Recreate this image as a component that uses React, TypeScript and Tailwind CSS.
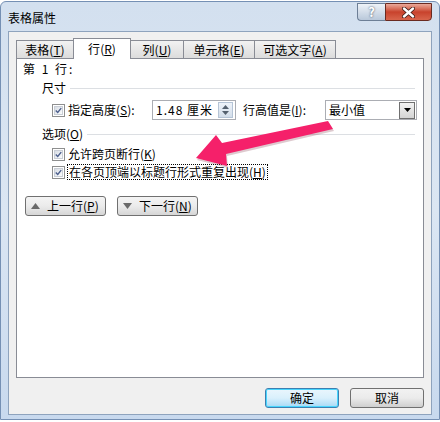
import React from "react";

const Check = () => (
  <div className="w-[13px] h-[13px] border border-[#8e8f8f] bg-white p-[1px] shrink-0">
    <div className="w-full h-full bg-gradient-to-br from-[#d8dde4] to-[#fbfcfd] border border-[#c9ced6] flex items-center justify-center">
      <svg width="9" height="9" viewBox="0 0 9 9">
        <path d="M1 4.5 L3.5 7 L8 1.5" stroke="#4b5e8c" strokeWidth="1.8" fill="none" />
      </svg>
    </div>
  </div>
);

const Key = ({ k }: { k: string }) => (
  <span>
    (<span className="underline">{k}</span>)
  </span>
);

const Tab = ({ label, k, w, active }: { label: string; k: string; w: string; active?: boolean }) =>
  active ? (
    <div className={`${w} h-[21px] bg-white border border-[#898c95] border-b-0 flex items-center justify-center text-[12px] relative z-10 -ml-px`}>
      {label}
      <Key k={k} />
    </div>
  ) : (
    <div className={`${w} h-[18px] mt-[2px] bg-gradient-to-b from-[#f2f2f2] to-[#dcdcdc] border border-[#898c95] border-b-0 flex items-center justify-center text-[12px] -ml-px first:ml-0`}>
      {label}
      <Key k={k} />
    </div>
  );

const BtnSmall = ({ up, label, k }: { up?: boolean; label: string; k: string }) => (
  <div className="w-[81px] h-[20px] rounded-[3px] border border-[#707070] bg-gradient-to-b from-[#f4f4f4] via-[#ebebeb] to-[#d6d6d6] flex items-center pl-[5px] gap-[7px] text-[12px]">
    <svg width="9" height="6" viewBox="0 0 9 6">
      {up ? <path d="M0 6 L4.5 0 L9 6 Z" fill="#6a6a6a" /> : <path d="M0 0 L4.5 6 L9 0 Z" fill="#6a6a6a" />}
    </svg>
    <span>
      {label}
      <Key k={k} />
    </span>
  </div>
);

export default function App() {
  return (
    <div className="w-[440px] h-[422px] relative overflow-hidden bg-white font-['Noto_Sans_CJK_SC','Liberation_Sans',sans-serif] text-black leading-[14px]">
      <div className="w-[440px] h-[419px] mt-[1px] rounded-t-[6px] border border-[#7590b4] bg-gradient-to-b from-[#d3e0ef] via-[#dbe6f3] to-[#c8d9ee] flex flex-col">
        {/* title bar */}
        <div className="h-[29px] flex items-start relative">
          <div className="pl-[7px] pt-[9px] text-[12px] leading-[14px]">表格属性</div>
          <div className="ml-auto mr-[7px] mt-[1px] flex">
            <div className="w-[28px] h-[18px] border border-[#6d7f96] border-r-0 rounded-bl-[4px] bg-gradient-to-b from-[#eef3f8] via-[#d3dde9] to-[#b9c8da] flex items-center justify-center text-[13px] font-bold text-white [text-shadow:0_0_2px_#2c3a4f]">
              ?
            </div>
            <div className="w-[47px] h-[18px] border border-[#6a2a20] rounded-br-[4px] bg-gradient-to-b from-[#e9a99a] via-[#c8422c] to-[#d8654c] flex items-center justify-center">
              <svg width="13" height="11" viewBox="0 0 13 11">
                <path d="M2 1.5 L11 9.5 M11 1.5 L2 9.5" stroke="#3a1a14" strokeWidth="4" strokeLinecap="round" />
                <path d="M2 1.5 L11 9.5 M11 1.5 L2 9.5" stroke="#ffffff" strokeWidth="2.4" strokeLinecap="round" />
              </svg>
            </div>
          </div>
        </div>
        {/* client */}
        <div className="mx-[7px] h-[384px] bg-[#f0f0f0] border border-[#8ea3bd] flex flex-col pl-[7px] pr-[7px] pt-[6px]">
          <div className="flex items-start h-[20px]">
            <Tab label="表格" k="T" w="w-[58px]" />
            <Tab label="行" k="R" w="w-[58px]" active />
            <Tab label="列" k="U" w="w-[54px]" />
            <Tab label="单元格" k="E" w="w-[72px]" />
            <Tab label="可选文字" k="A" w="w-[82px]" />
          </div>
          <div className="w-[408px] h-[320px] bg-white border border-[#898c95] text-[12px] relative">
            <div className="pl-[6px] mt-[3px] h-[14px] tracking-[2px]">第 1 行:</div>
            <div className="flex items-center pl-[25px] pr-[8px] mt-[5px] h-[14px]">
              <span>尺寸</span>
              <div className="flex-1 h-px bg-[#dcdfe3] ml-[4px]" />
            </div>
            <div className="flex items-center pl-[35px] mt-[5px] h-[20px]">
              <Check />
              <span className="ml-[3px] w-[84px]">
                指定高度<Key k="S" />:
              </span>
              <div className="w-[84px] h-[20px] border border-[#abadb3] flex items-center pl-[3px] pr-[2px]">
                <span className="flex-1 tracking-[1px]">1.48 厘米</span>
                <div className="w-[15px] h-[16px] border border-[#b5c4d6] bg-gradient-to-b from-[#eef3f9] to-[#d3deea] flex flex-col items-center justify-center gap-[2px]">
                  <svg width="7" height="4" viewBox="0 0 7 4"><path d="M0 4 L3.5 0 L7 4Z" fill="#54606e" /></svg>
                  <svg width="7" height="4" viewBox="0 0 7 4"><path d="M0 0 L3.5 4 L7 0Z" fill="#54606e" /></svg>
                </div>
              </div>
              <span className="ml-[7px] w-[82px]">
                行高值是<Key k="I" />:
              </span>
              <div className="w-[92px] h-[20px] border border-[#abadb3] flex items-center pl-[3px] pr-[1px]">
                <span className="flex-1">最小值</span>
                <div className="w-[16px] h-[17px] border border-[#707070] bg-gradient-to-b from-[#f2f2f2] to-[#d4d4d4] flex items-center justify-center">
                  <svg width="7" height="4" viewBox="0 0 7 4"><path d="M0 0 L3.5 4 L7 0Z" fill="#000" /></svg>
                </div>
              </div>
            </div>
            <div className="flex items-center pl-[25px] pr-[8px] mt-[7px] h-[14px]">
              <span>
                选项<Key k="O" />
              </span>
              <div className="flex-1 h-px bg-[#dcdfe3] ml-[4px]" />
            </div>
            <div className="flex items-center pl-[35px] mt-[6px] h-[14px]">
              <Check />
              <span className="ml-[3px]">
                允许跨页断行<Key k="K" />
              </span>
            </div>
            <div className="flex items-center pl-[35px] mt-[3px] h-[16px]">
              <Check />
              <span className="ml-[2px] px-[1px] border border-dotted border-black h-[16px] flex items-center">
                在各页顶端以标题行形式重复出现<Key k="H" />
              </span>
            </div>
            <div className="flex pl-[8px] mt-[16px] gap-[11px]">
              <BtnSmall up label="上一行" k="P" />
              <BtnSmall label="下一行" k="N" />
            </div>
            <svg className="absolute left-0 top-0 pointer-events-none" width="408" height="320" viewBox="16 57 408 320">
              <polygon
                points="195,156 215,133 221,141 327,119 332,127 225,152 226,164"
                fill="#7a2a40"
                opacity="0.25"
                transform="translate(1,2)"
              />
              <polygon points="195,156 215,133 221,141 327,119 332,127 225,152 226,164" fill="#f5206a" />
            </svg>
          </div>
          <div className="flex justify-end gap-[11px] mt-[10px] pr-[-1px]">
            <div className="w-[74px] h-[20px] rounded-[3px] border border-[#3c7fb1] shadow-[inset_0_0_0_1px_#48d5fd] bg-gradient-to-b from-[#eaf6fd] via-[#d9f0fc] to-[#a7d9f5] flex items-center justify-center text-[12px]">
              确定
            </div>
            <div className="w-[74px] h-[20px] rounded-[3px] border border-[#707070] bg-gradient-to-b from-[#f2f2f2] via-[#ebebeb] to-[#cfcfcf] flex items-center justify-center text-[12px]">
              取消
            </div>
          </div>
        </div>
      </div>
    </div>
  );
}
